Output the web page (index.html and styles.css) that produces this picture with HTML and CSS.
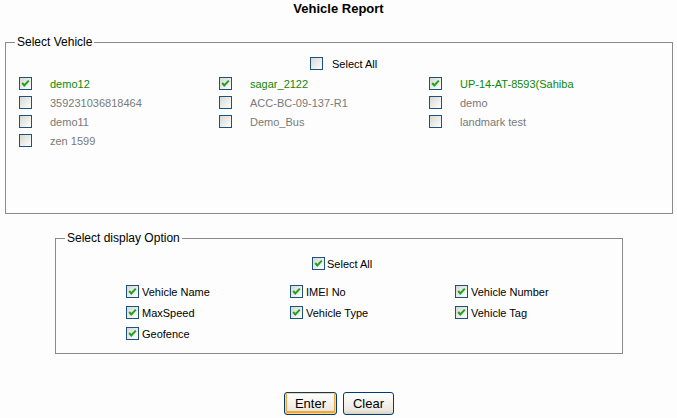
FILE: index.html
```html
<!DOCTYPE html>
<html>
<head>
<meta charset="utf-8">
<title>Vehicle Report</title>
<link rel="stylesheet" href="styles.css">
</head>
<body>
<div class="page">
  <h1 class="title">Vehicle Report</h1>

  <fieldset class="box vehicles">
    <legend>Select Vehicle</legend>
    <div class="all-row all-row-1">
      <span class="cb"><svg width="13" height="13" viewBox="0 0 13 13"><defs><linearGradient id="g0" x1="0" y1="0" x2="1" y2="1"><stop offset="0" stop-color="#d6d6d0"/><stop offset="1" stop-color="#ffffff"/></linearGradient></defs><rect x="0.5" y="0.5" width="12" height="12" fill="url(#g0)" stroke="#1c5180"/></svg></span>
      <span class="all-label">Select All</span>
    </div>
    <div class="vgrid">
      <div class="item on"><span class="cb"><svg width="13" height="13" viewBox="0 0 13 13"><rect x="0.5" y="0.5" width="12" height="12" fill="url(#g0)" stroke="#1c5180"/><polyline points="3.2,6 5.3,8.4 9.8,3.6" fill="none" stroke="#21a121" stroke-width="2"/></svg></span><span class="lbl">demo12</span></div>
      <div class="item on"><span class="cb"><svg width="13" height="13" viewBox="0 0 13 13"><rect x="0.5" y="0.5" width="12" height="12" fill="url(#g0)" stroke="#1c5180"/><polyline points="3.2,6 5.3,8.4 9.8,3.6" fill="none" stroke="#21a121" stroke-width="2"/></svg></span><span class="lbl">sagar_2122</span></div>
      <div class="item on"><span class="cb"><svg width="13" height="13" viewBox="0 0 13 13"><rect x="0.5" y="0.5" width="12" height="12" fill="url(#g0)" stroke="#1c5180"/><polyline points="3.2,6 5.3,8.4 9.8,3.6" fill="none" stroke="#21a121" stroke-width="2"/></svg></span><span class="lbl">UP-14-AT-8593(Sahiba</span></div>

      <div class="item"><span class="cb"><svg width="13" height="13" viewBox="0 0 13 13"><rect x="0.5" y="0.5" width="12" height="12" fill="url(#g0)" stroke="#1c5180"/></svg></span><span class="lbl">359231036818464</span></div>
      <div class="item"><span class="cb"><svg width="13" height="13" viewBox="0 0 13 13"><rect x="0.5" y="0.5" width="12" height="12" fill="url(#g0)" stroke="#1c5180"/></svg></span><span class="lbl">ACC-BC-09-137-R1</span></div>
      <div class="item"><span class="cb"><svg width="13" height="13" viewBox="0 0 13 13"><rect x="0.5" y="0.5" width="12" height="12" fill="url(#g0)" stroke="#1c5180"/></svg></span><span class="lbl">demo</span></div>

      <div class="item"><span class="cb"><svg width="13" height="13" viewBox="0 0 13 13"><rect x="0.5" y="0.5" width="12" height="12" fill="url(#g0)" stroke="#1c5180"/></svg></span><span class="lbl">demo11</span></div>
      <div class="item"><span class="cb"><svg width="13" height="13" viewBox="0 0 13 13"><rect x="0.5" y="0.5" width="12" height="12" fill="url(#g0)" stroke="#1c5180"/></svg></span><span class="lbl">Demo_Bus</span></div>
      <div class="item"><span class="cb"><svg width="13" height="13" viewBox="0 0 13 13"><rect x="0.5" y="0.5" width="12" height="12" fill="url(#g0)" stroke="#1c5180"/></svg></span><span class="lbl">landmark test</span></div>

      <div class="item"><span class="cb"><svg width="13" height="13" viewBox="0 0 13 13"><rect x="0.5" y="0.5" width="12" height="12" fill="url(#g0)" stroke="#1c5180"/></svg></span><span class="lbl">zen 1599</span></div>
    </div>
  </fieldset>

  <fieldset class="box options">
    <legend>Select display Option</legend>
    <div class="all-row all-row-2">
      <span class="cb"><svg width="13" height="13" viewBox="0 0 13 13"><rect x="0.5" y="0.5" width="12" height="12" fill="url(#g0)" stroke="#1c5180"/><polyline points="3.2,6 5.3,8.4 9.8,3.6" fill="none" stroke="#21a121" stroke-width="2"/></svg></span>
      <span class="all-label">Select All</span>
    </div>
    <div class="ogrid">
      <div class="opt"><span class="cb"><svg width="13" height="13" viewBox="0 0 13 13"><rect x="0.5" y="0.5" width="12" height="12" fill="url(#g0)" stroke="#1c5180"/><polyline points="3.2,6 5.3,8.4 9.8,3.6" fill="none" stroke="#21a121" stroke-width="2"/></svg></span><span class="lbl">Vehicle Name</span></div>
      <div class="opt"><span class="cb"><svg width="13" height="13" viewBox="0 0 13 13"><rect x="0.5" y="0.5" width="12" height="12" fill="url(#g0)" stroke="#1c5180"/><polyline points="3.2,6 5.3,8.4 9.8,3.6" fill="none" stroke="#21a121" stroke-width="2"/></svg></span><span class="lbl">IMEI No</span></div>
      <div class="opt"><span class="cb"><svg width="13" height="13" viewBox="0 0 13 13"><rect x="0.5" y="0.5" width="12" height="12" fill="url(#g0)" stroke="#1c5180"/><polyline points="3.2,6 5.3,8.4 9.8,3.6" fill="none" stroke="#21a121" stroke-width="2"/></svg></span><span class="lbl">Vehicle Number</span></div>

      <div class="opt"><span class="cb"><svg width="13" height="13" viewBox="0 0 13 13"><rect x="0.5" y="0.5" width="12" height="12" fill="url(#g0)" stroke="#1c5180"/><polyline points="3.2,6 5.3,8.4 9.8,3.6" fill="none" stroke="#21a121" stroke-width="2"/></svg></span><span class="lbl">MaxSpeed</span></div>
      <div class="opt"><span class="cb"><svg width="13" height="13" viewBox="0 0 13 13"><rect x="0.5" y="0.5" width="12" height="12" fill="url(#g0)" stroke="#1c5180"/><polyline points="3.2,6 5.3,8.4 9.8,3.6" fill="none" stroke="#21a121" stroke-width="2"/></svg></span><span class="lbl">Vehicle Type</span></div>
      <div class="opt"><span class="cb"><svg width="13" height="13" viewBox="0 0 13 13"><rect x="0.5" y="0.5" width="12" height="12" fill="url(#g0)" stroke="#1c5180"/><polyline points="3.2,6 5.3,8.4 9.8,3.6" fill="none" stroke="#21a121" stroke-width="2"/></svg></span><span class="lbl">Vehicle Tag</span></div>

      <div class="opt"><span class="cb"><svg width="13" height="13" viewBox="0 0 13 13"><rect x="0.5" y="0.5" width="12" height="12" fill="url(#g0)" stroke="#1c5180"/><polyline points="3.2,6 5.3,8.4 9.8,3.6" fill="none" stroke="#21a121" stroke-width="2"/></svg></span><span class="lbl">Geofence</span></div>
    </div>
  </fieldset>

  <div class="buttons">
    <button class="btn btn-default" type="button">Enter</button>
    <button class="btn" type="button">Clear</button>
  </div>
</div>
</body>
</html>
```

FILE: styles.css
```css
html, body {
  margin: 0;
  padding: 0;
  background: #fcfdfc;
}

body {
  font-family: "Liberation Sans", Arial, sans-serif;
  font-size: 11px;
  color: #000;
}

.page {
  width: 677px;
}

.title {
  margin: 0;
  padding-top: 1px;
  height: 15px;
  font-size: 13px;
  line-height: 15px;
  font-weight: bold;
  text-align: center;
  color: #000;
}

.box {
  box-sizing: border-box;
  border: 1px solid #8a8a8a;
  padding: 0;
  min-width: 0;
}

.box legend {
  margin-left: 9px;
  padding: 0 2px;
  font-size: 12px;
  line-height: 14px;
  color: #000;
}

.vehicles {
  margin: 19px 4px 0 5px;
  height: 179px;
}

.options {
  margin: 17px 0 0 55px;
  width: 568px;
  padding-bottom: 9px;
}

.cb {
  display: block;
  width: 13px;
  height: 13px;
  flex: none;
}

.cb svg {
  display: block;
}

.all-row {
  display: flex;
  align-items: center;
  height: 19px;
}

.all-row-1 {
  margin-top: 5px;
  padding-left: 304px;
}

.all-row-1 .all-label {
  margin-left: 9px;
}

.all-row-2 {
  margin-top: 9px;
  padding-left: 256px;
}

.all-row-2 .all-label {
  margin-left: 2px;
}

.vgrid {
  display: grid;
  grid-template-columns: 200px 210px 1fr;
  grid-auto-rows: 19px;
  padding-left: 13px;
  margin-top: 1px;
}

.item {
  display: flex;
  align-items: center;
  color: #7a7a7a;
}

.item .lbl {
  margin-left: 18px;
  white-space: nowrap;
}

.item.on {
  color: #0c870c;
}

.ogrid {
  display: grid;
  grid-template-columns: 164px 165px 1fr;
  grid-auto-rows: 21px;
  padding-left: 70px;
  margin-top: 8px;
}

.opt {
  display: flex;
  align-items: center;
}

.opt .lbl {
  margin-left: 3px;
  white-space: nowrap;
}

.buttons {
  display: flex;
  justify-content: center;
  gap: 6px;
  margin-top: 38px;
  padding-left: 1px;
}

.btn {
  box-sizing: border-box;
  height: 23px;
  width: 51px;
  padding: 0;
  border: 1px solid #003c74;
  border-radius: 3px;
  background: linear-gradient(#ffffff 0%, #f4f3ee 45%, #ebe9e1 80%, #d8d3c6 100%);
  font-family: "Liberation Sans", Arial, sans-serif;
  font-size: 13px;
  color: #000;
}

.btn-default {
  width: 53px;
  box-shadow: inset 0 0 0 1px #fcd58a, inset 0 -1px 0 2px #f0a83a;
}
```
